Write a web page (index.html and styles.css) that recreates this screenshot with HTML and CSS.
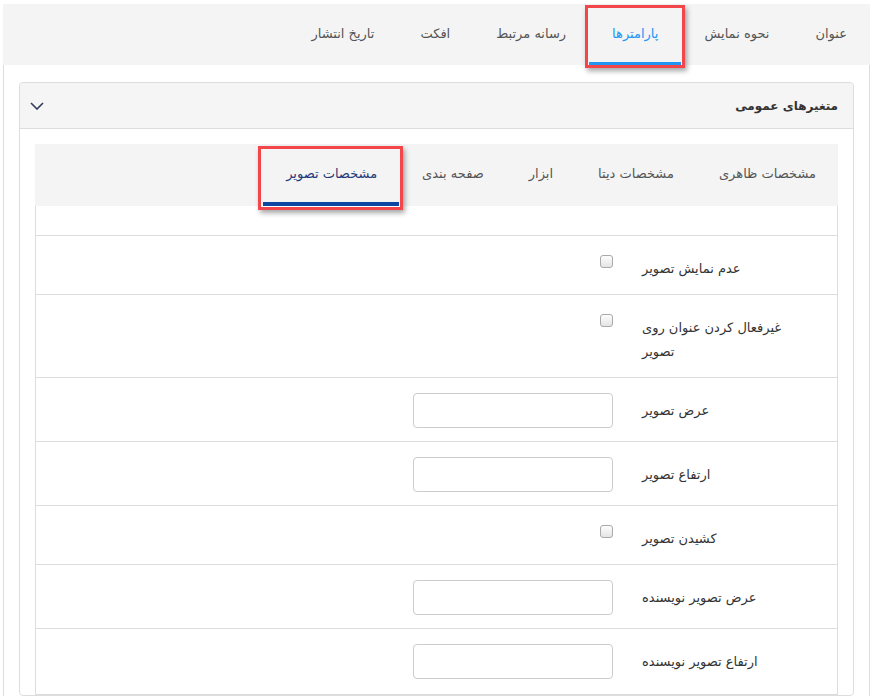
FILE: index.html
```html
<!DOCTYPE html>
<html lang="fa" dir="rtl">
<head>
<meta charset="utf-8">
<title>پارامترها</title>
<link rel="stylesheet" href="styles.css">
</head>
<body>
<div class="page">
  <nav class="top-tabs">
    <a class="top-tab">عنوان</a>
    <a class="top-tab">نحوه نمایش</a>
    <a class="top-tab active">پارامترها</a>
    <a class="top-tab">رسانه مرتبط</a>
    <a class="top-tab">افکت</a>
    <a class="top-tab">تاریخ انتشار</a>
  </nav>
  <div class="outer">
    <section class="panel">
      <header class="panel-head">
        <span class="panel-title">متغیرهای عمومی</span>
        <svg class="chevron" width="14" height="8" viewBox="0 0 14 8"><polyline points="1,1 7,7 13,1" fill="none" stroke="#2f3b58" stroke-width="1.6"/></svg>
      </header>
      <div class="panel-body">
        <nav class="inner-tabs">
          <a class="inner-tab">مشخصات ظاهری</a>
          <a class="inner-tab">مشخصات دیتا</a>
          <a class="inner-tab">ابزار</a>
          <a class="inner-tab">صفحه بندی</a>
          <a class="inner-tab active">مشخصات تصویر</a>
        </nav>
        <div class="form">
          <div class="spacer"></div>
          <div class="row">
            <label class="label">عدم نمایش تصویر</label>
            <div class="control"><input type="checkbox" class="check"></div>
          </div>
          <div class="row">
            <label class="label">غیرفعال کردن عنوان روی تصویر</label>
            <div class="control"><input type="checkbox" class="check"></div>
          </div>
          <div class="row">
            <label class="label">عرض تصویر</label>
            <div class="control"><input type="text" class="field"></div>
          </div>
          <div class="row">
            <label class="label">ارتفاع تصویر</label>
            <div class="control"><input type="text" class="field"></div>
          </div>
          <div class="row">
            <label class="label">کشیدن تصویر</label>
            <div class="control"><input type="checkbox" class="check"></div>
          </div>
          <div class="row">
            <label class="label">عرض تصویر نویسنده</label>
            <div class="control"><input type="text" class="field"></div>
          </div>
          <div class="row last">
            <label class="label">ارتفاع تصویر نویسنده</label>
            <div class="control"><input type="text" class="field"></div>
          </div>
        </div>
      </div>
    </section>
  </div>
</div>
</body>
</html>
```

FILE: styles.css
```css
html, body {
  margin: 0;
  padding: 0;
  background: #fff;
}
body {
  font-family: "DejaVu Sans", sans-serif;
  font-size: 13px;
  color: #333;
}
.page {
  padding: 4px 5px 0 3px;
}
.top-tabs {
  display: flex;
  background: #f4f4f4;
  height: 61px;
}
.top-tab {
  position: relative;
  display: flex;
  align-items: center;
  padding: 0 23px 3px;
  color: #555;
  box-sizing: border-box;
  height: 61px;
}
.top-tab.active {
  color: #2196f3;
  border-bottom: 3px solid #2196f3;
  padding-bottom: 0;
}
.top-tab.active::after {
  content: "";
  position: absolute;
  top: 1px;
  bottom: -6px;
  left: -4px;
  right: -4px;
  border: 3px solid #f2464a;
  box-shadow: 2px 3px 5px rgba(0,0,0,0.35);
}
.outer {
  border-left: 1px solid #ddd;
  border-right: 1px solid #ddd;
  padding: 17px 15px 0;
}
.panel {
  border: 1px solid #ddd;
  border-radius: 4px;
}
.panel-head {
  display: flex;
  justify-content: space-between;
  align-items: center;
  height: 45px;
  padding: 0 15px 0 10px;
  background: #f5f5f5;
  border-bottom: 1px solid #ddd;
  border-radius: 4px 4px 0 0;
}
.panel-title {
  font-weight: bold;
  font-size: 12px;
  color: #333;
}
.chevron {
  display: block;
}
.panel-body {
  padding: 15px 15px 0;
}
.inner-tabs {
  display: flex;
  background: #f4f4f4;
  height: 62px;
}
.inner-tab {
  position: relative;
  display: flex;
  align-items: center;
  padding: 0 22px 4px 23px;
  box-sizing: border-box;
  height: 62px;
  color: #555;
}
.inner-tab.active {
  color: #1f3a7a;
  border-bottom: 4px solid #0d47a1;
  padding-bottom: 0;
}
.inner-tab.active::after {
  content: "";
  position: absolute;
  top: 2px;
  bottom: -8px;
  left: -5px;
  right: -4px;
  border: 3px solid #f2464a;
  box-shadow: 2px 3px 5px rgba(0,0,0,0.35);
}
.form {
  border: 1px solid #ddd;
  border-top: none;
}
.spacer {
  height: 29px;
  border-bottom: 1px solid #ddd;
}
.row {
  display: flex;
  align-items: flex-start;
  padding: 15px 48px 13px 0;
  border-bottom: 1px solid #ddd;
}
.row.last {
  border-bottom: none;
  padding-bottom: 15px;
}
.label {
  width: 147px;
  text-align: left;
  padding-top: 6px;
  line-height: 24px;
  color: #333;
}
.control {
  margin-right: 29px;
  display: flex;
}
.check {
  appearance: none;
  -webkit-appearance: none;
  width: 13px;
  height: 13px;
  margin: 4px 0 0;
  border: 1px solid #a9a9a9;
  border-radius: 3px;
  background: linear-gradient(#fdfdfd, #e4e4e4);
  box-sizing: border-box;
}
.field {
  width: 200px;
  height: 35px;
  box-sizing: border-box;
  border: 1px solid #ccc;
  border-radius: 4px;
  background: #fff;
  margin: 0;
  padding: 6px 12px;
}
```
